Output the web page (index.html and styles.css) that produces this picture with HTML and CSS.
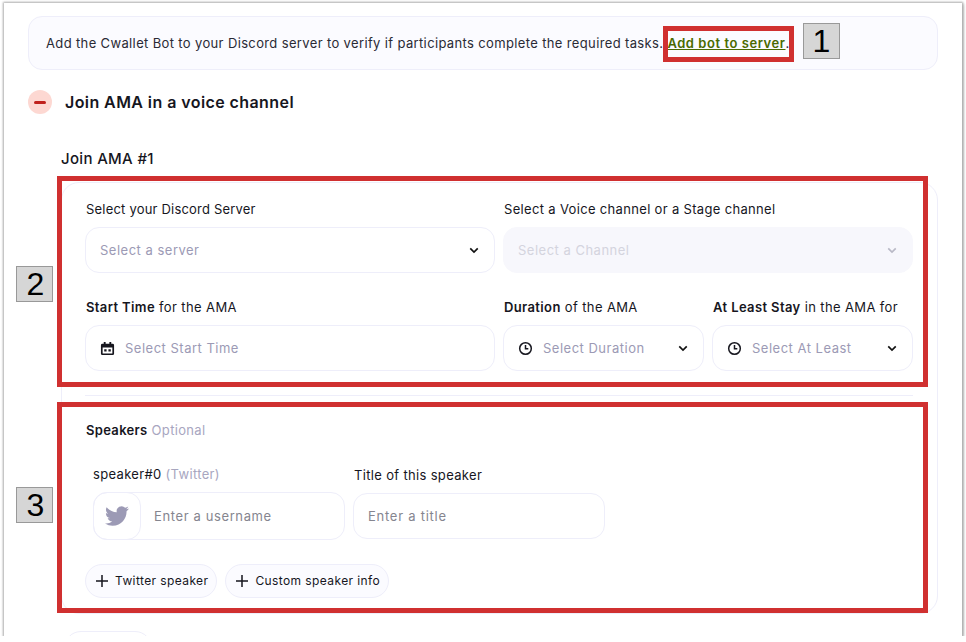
FILE: index.html
```html
<!DOCTYPE html>
<html>
<head>
    <title>Join AMA task</title>
    <link rel="stylesheet" href="styles.css">
</head>
<body>
    <div class="shot">
        <div class="notice">
            <span>Add the Cwallet Bot to your Discord server to verify if participants complete the required tasks.</span>
            <a class="notice-link" href="#">Add bot to server</a>.
        </div>

        <div class="task-head">
            <span class="minus-btn"><span class="minus-bar"></span></span>
            <h2>Join AMA in a voice channel</h2>
        </div>

        <h3 class="ama-title">Join AMA #1</h3>

        <div class="card">
            <div class="row-2">
                <div class="field">
                    <label class="tight">Select your Discord Server</label>
                    <div class="select">
                        <span class="holder">Select a server</span>
                        <svg class="chevron" viewBox="0 0 12 8"><path d="M1.500 1.500 6 6l4.500-4.500"/></svg>
                    </div>
                </div>
                <div class="field">
                    <label>Select a Voice channel or a Stage channel</label>
                    <div class="select disabled">
                        <span class="holder">Select a Channel</span>
                        <svg class="chevron" viewBox="0 0 12 8"><path d="M1.500 1.500 6 6l4.500-4.500"/></svg>
                    </div>
                </div>
            </div>

            <div class="row-2 row-time">
                <div class="field">
                    <label><b>Start Time</b> for the AMA</label>
                    <div class="select">
                        <svg class="icon" viewBox="0 0 16 16"><path d="M4 1h2v2h4V1h2v2h1.500A1.500 1.500 0 0 1 15 4.500v9a1.500 1.500 0 0 1-1.500 1.500h-11A1.500 1.500 0 0 1 1 13.500v-9A1.500 1.500 0 0 1 2.500 3H4zM2.800 7v6.200h10.400V7zM4.500 8.800h2.500v2.400H4.500zm4.500 0h2.500v2.400H9z" fill-rule="evenodd"/></svg>
                        <span class="holder">Select Start Time</span>
                    </div>
                </div>
                <div class="row-pair">
                    <div class="field">
                        <label><b>Duration</b> of the AMA</label>
                        <div class="select">
                            <svg class="icon clock" viewBox="0 0 16 16"><circle cx="8" cy="8" r="6.200"/><path d="M8 4.300V8.300h3"/></svg>
                            <span class="holder">Select Duration</span>
                            <svg class="chevron" viewBox="0 0 12 8"><path d="M1.500 1.500 6 6l4.500-4.500"/></svg>
                        </div>
                    </div>
                    <div class="field">
                        <label><b>At Least Stay</b> in the AMA for</label>
                        <div class="select">
                            <svg class="icon clock" viewBox="0 0 16 16"><circle cx="8" cy="8" r="6.200"/><path d="M8 4.300V8.300h3"/></svg>
                            <span class="holder">Select At Least</span>
                            <svg class="chevron" viewBox="0 0 12 8"><path d="M1.500 1.500 6 6l4.500-4.500"/></svg>
                        </div>
                    </div>
                </div>
            </div>

            <div class="divider"></div>

            <div class="speakers-head"><b>Speakers</b> <span class="muted">Optional</span></div>

            <div class="speaker-row">
                <div class="field field-speaker">
                    <label>speaker#0 <span class="muted">(Twitter)</span></label>
                    <div class="input-group">
                        <span class="bird-box">
                            <svg viewBox="0 0 24 24"><path d="M23.953 4.570a10 10 0 0 1-2.825.775 4.958 4.958 0 0 0 2.163-2.723c-.951.555-2.005.959-3.127 1.184a4.920 4.920 0 0 0-8.384 4.482C7.690 8.095 4.067 6.130 1.640 3.162a4.822 4.822 0 0 0-.666 2.475c0 1.710.870 3.213 2.188 4.096a4.904 4.904 0 0 1-2.228-.616v.060a4.923 4.923 0 0 0 3.946 4.827 4.996 4.996 0 0 1-2.212.085 4.936 4.936 0 0 0 4.604 3.417 9.867 9.867 0 0 1-6.102 2.105c-.390 0-.779-.023-1.170-.067a13.995 13.995 0 0 0 7.557 2.209c9.053 0 13.998-7.496 13.998-13.985 0-.210 0-.420-.015-.630A9.935 9.935 0 0 0 24 4.590z"/></svg>
                        </span>
                        <span class="holder dark">Enter a username</span>
                    </div>
                </div>
                <div class="field field-title">
                    <label>Title of this speaker</label>
                    <div class="select">
                        <span class="holder dark short">Enter a title</span>
                    </div>
                </div>
            </div>

            <div class="pill-row">
                <a class="pill" href="#"><svg viewBox="0 0 12 12"><path d="M6 0v12M0 6h12"/></svg>Twitter speaker</a>
                <a class="pill" href="#"><svg viewBox="0 0 12 12"><path d="M6 0v12M0 6h12"/></svg>Custom speaker info</a>
            </div>
        </div>

        <div class="next-pill"></div>

        <!-- annotations drawn over the screenshot -->
        <div class="mark mark-1"></div>
        <div class="mark mark-2"></div>
        <div class="mark mark-3"></div>
        <div class="tag tag-1">1</div>
        <div class="tag tag-2">2</div>
        <div class="tag tag-3">3</div>
    </div>
</body>
</html>
```

FILE: styles.css
```css
/* Join AMA task form */
body {
    margin: 0;
    background: #fff;
    font-family: Inter, "Noto Sans", sans-serif;
    font-size: 13px;
    letter-spacing: 0.33px;
    color: #16161e;
}

.shot {
    position: relative;
    box-sizing: border-box;
    width: 958px;
    height: 633px;
    margin: 3px 0 0 4px;
    padding: 13px 24px 0;
    overflow: hidden;
    background: #fff;
    box-shadow: 0 0 2px 1px #b4b4b4, 1px 1px 3px #888;
}

.notice {
    box-sizing: border-box;
    height: 54px;
    padding: 0 17px;
    line-height: 52px;
    background: #fbfbff;
    border: 1px solid #eeeefa;
    border-radius: 14px;
    letter-spacing: 0.36px;
    color: #2a2a35;
}

.notice-link {
    font-weight: 600;
    letter-spacing: 0.55px;
    color: #4a6a00;
}

.task-head {
    display: flex;
    align-items: center;
    gap: 13px;
    margin-top: 20px;
}

.task-head h2 {
    margin: 0;
    font-size: 16px;
    font-weight: 600;
    letter-spacing: 0.42px;
}

.minus-btn {
    display: flex;
    align-items: center;
    justify-content: center;
    width: 24px;
    height: 24px;
    border-radius: 50%;
    background: #fdd8d2;
}

.minus-bar {
    width: 12px;
    height: 3px;
    border-radius: 2px;
    background: #c0211c;
}

.ama-title {
    margin: 35px 0 0 33px;
    height: 20px;
    line-height: 20px;
    font-size: 15px;
    font-weight: 500;
}

.card {
    box-sizing: border-box;
    height: 432px;
    margin: 13px 0 0 33px;
    padding: 17px 24px 0 23px;
    border: 1px solid #eeeefa;
    border-radius: 18px;
}

.row-2 {
    display: grid;
    grid-template-columns: 1fr 1fr;
    gap: 8px;
}

.row-time {
    margin-top: 25px;
    letter-spacing: 0.38px;
}

.row-pair {
    display: grid;
    grid-template-columns: 1fr 1fr;
    gap: 8px;
}

.field label {
    display: block;
    height: 18px;
    line-height: 18px;
    margin-bottom: 9px;
    padding-left: 1px;
    white-space: nowrap;
}

.field label.tight {
    letter-spacing: 0.2px;
}

.field-speaker label {
    padding-left: 0;
}

.field b,
.speakers-head b {
    font-weight: 600;
}

.select {
    display: flex;
    align-items: center;
    box-sizing: border-box;
    height: 46px;
    padding: 0 14px;
    background: #fff;
    border: 1px solid #eeeefa;
    border-radius: 14px;
}

.select.disabled {
    background: #f7f7fc;
    border-color: #f7f7fc;
}

.holder {
    letter-spacing: 0.5px;
    color: #9c9ab5;
}

.holder.dark {
    letter-spacing: 0.62px;
    color: #85858f;
}

.holder.dark.short {
    letter-spacing: 0.75px;
}

.disabled .holder {
    color: #d4d4de;
}

.chevron {
    width: 10px;
    height: 7px;
    margin-left: auto;
    margin-right: 1px;
    fill: none;
    stroke: #111;
    stroke-width: 2;
}

.disabled .chevron {
    stroke: #b9b9c6;
}

.icon {
    flex: none;
    width: 15px;
    height: 15px;
    margin-right: 10px;
    fill: #16161e;
}

.clock {
    fill: none;
    stroke: #16161e;
    stroke-width: 1.600;
}

.divider {
    height: 1px;
    margin-top: 24px;
    background: #eeeefa;
}

.speakers-head {
    height: 18px;
    line-height: 18px;
    margin-top: 25px;
    padding-left: 1px;
}

.muted {
    color: #a8a6bf;
}

.speaker-row {
    display: flex;
    gap: 8px;
    margin: 26px 0 0 8px;
}

.speaker-row .field {
    width: 252px;
}

.field-title {
    padding-top: 1px;
}

.input-group {
    display: flex;
    align-items: center;
    box-sizing: border-box;
    height: 48px;
    border: 1px solid #eeeefa;
    border-radius: 14px;
}

.bird-box {
    display: flex;
    align-items: center;
    justify-content: center;
    box-sizing: border-box;
    width: 48px;
    height: 48px;
    margin: -1px 13px -1px -1px;
    border: 1px solid #eeeefa;
    border-radius: 14px;
}

.bird-box svg {
    width: 24px;
    height: 24px;
    fill: #9c9ab5;
}

.pill-row {
    display: flex;
    gap: 8px;
    margin-top: 24px;
}

.pill {
    display: flex;
    align-items: center;
    box-sizing: border-box;
    height: 34px;
    padding: 0 8px 1px 10px;
    background: #fbfbff;
    border: 1px solid #eeeefa;
    border-radius: 17px;
    color: #16161e;
    font-size: 12px;
    letter-spacing: 0.4px;
    text-decoration: none;
}

.pill svg {
    width: 12px;
    height: 12px;
    margin-right: 7px;
    fill: none;
    stroke: #16161e;
    stroke-width: 1.500;
}

.next-pill {
    box-sizing: border-box;
    width: 88px;
    height: 34px;
    margin: 17px 0 0 36px;
    border: 1px solid #eeeefa;
    border-radius: 17px;
}

/* red boxes and number tags */
.mark {
    position: absolute;
    box-sizing: border-box;
    border: 5px solid #d03030;
}

.mark-1 { left: 659px; top: 23px; width: 131px; height: 36px; }
.mark-2 { left: 53px; top: 173px; width: 871px; height: 211px; }
.mark-3 { left: 53px; top: 399px; width: 871px; height: 211px; }

.tag {
    position: absolute;
    box-sizing: border-box;
    width: 37px;
    height: 36px;
    background: #d6d6d6;
    border: 1px solid #999;
    color: #000;
    font-family: "Liberation Sans", Arial, sans-serif;
    font-size: 32px;
    letter-spacing: 0;
    line-height: 34px;
    text-align: center;
}

.tag-1 { left: 799px; top: 20px; }
.tag-2 { left: 12px; top: 263px; text-indent: 2px; }
.tag-3 { left: 12px; top: 484px; text-indent: 2px; }
```
